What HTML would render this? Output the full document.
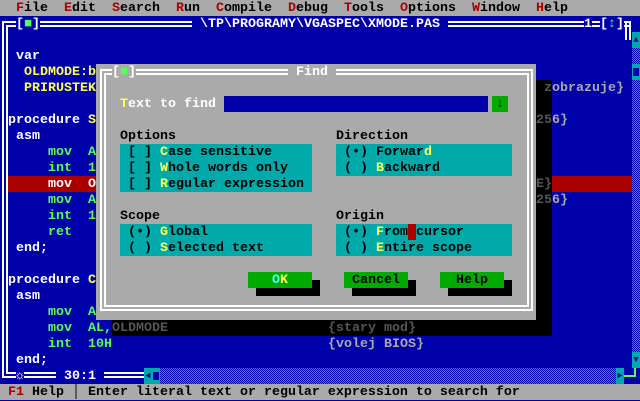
<!DOCTYPE html>
<html><head><meta charset="utf-8"><style>
*{margin:0;padding:0;box-sizing:border-box}
body{width:640px;height:400px;background:#0000aa;position:relative;overflow:hidden;font:bold 13.333px/16px "Liberation Mono","DejaVu Sans Mono",monospace}
.a{position:absolute}
.t{position:absolute;white-space:pre;height:16px;line-height:17px}
.r{color:#aa0000}.k{color:#000}.w{color:#fff}.y{color:#ffff55}.g{color:#55ff55}.l{color:#aaaaaa}.d{color:#555}.c{color:#55ffff}
.dith{background:repeating-conic-gradient(#00aaaa 0 25%,#0000aa 0 50%) 0 0/2px 2px}
</style></head><body>
<div class="a" style="left:0;top:0;width:640px;height:16px;background:#aaa"></div>
<div class="t k" style="left:0;top:0">  <span class="r">F</span>ile  <span class="r">E</span>dit  <span class="r">S</span>earch  <span class="r">R</span>un  <span class="r">C</span>ompile  <span class="r">D</span>ebug  <span class="r">T</span>ools  <span class="r">O</span>ptions  <span class="r">W</span>indow  <span class="r">H</span>elp</div>
<div class="a" style="left:2px;top:21px;width:629px;height:357px;border:6px double #fff;border-right:none"></div>
<div class="a" style="left:625px;top:21px;width:6px;height:19px;border-left:2px solid #fff;border-right:2px solid #fff"></div>
<div class="t w" style="left:16px;top:16px;background:#0000aa">[<span class="g">■</span>]</div>
<div class="t w" style="left:192px;top:16px;background:#0000aa"> \TP\PROGRAMY\VGASPEC\XMODE.PAS </div>
<div class="t w" style="left:584px;top:16px;background:#0000aa">1</div>
<div class="t w" style="left:600px;top:16px;background:#0000aa">[<span class="g">↕</span>]</div>
<div class="t w" style="left:16px;top:48px">var</div>
<div class="t y" style="left:24px;top:64px">OLDMODE:b</div>
<div class="t y" style="left:24px;top:80px">PRIRUSTEK</div>
<div class="t w" style="left:8px;top:112px">procedure <span class="y">S</span></div>
<div class="t w" style="left:16px;top:128px">asm</div>
<div class="t g" style="left:48px;top:144px">mov  A</div>
<div class="t g" style="left:48px;top:160px">int  1</div>
<div class="a" style="left:8px;top:176px;width:624px;height:16px;background:#aa0000"></div>
<div class="t w" style="left:48px;top:176px">mov  O</div>
<div class="t g" style="left:48px;top:192px">mov  A</div>
<div class="t g" style="left:48px;top:208px">int  1</div>
<div class="t g" style="left:48px;top:224px">ret</div>
<div class="t w" style="left:16px;top:240px">end;</div>
<div class="t w" style="left:8px;top:272px">procedure <span class="y">C</span></div>
<div class="t w" style="left:16px;top:288px">asm</div>
<div class="t g" style="left:48px;top:304px">mov  A</div>
<div class="t g" style="left:48px;top:320px">mov  AL,</div>
<div class="t g" style="left:48px;top:336px">int  10H</div>
<div class="t w" style="left:16px;top:352px">end;</div>
<div class="t l" style="left:544px;top:80px">zobrazuje}</div>
<div class="t l" style="left:536px;top:112px">256}</div>
<div class="t l" style="left:536px;top:176px">E}</div>
<div class="t l" style="left:536px;top:192px">256}</div>
<div class="t l" style="left:328px;top:336px">{volej BIOS}</div>
<div class="a" style="left:536px;top:80px;width:16px;height:256px;background:#000"></div>
<div class="a" style="left:112px;top:320px;width:440px;height:16px;background:#000"></div>
<div class="t d" style="left:544px;top:80px">z</div>
<div class="t d" style="left:536px;top:112px">25</div>
<div class="t d" style="left:536px;top:176px">E}</div>
<div class="t d" style="left:536px;top:192px">25</div>
<div class="t d" style="left:112px;top:320px">OLDMODE</div>
<div class="t d" style="left:328px;top:320px">{stary mod}</div>
<div class="a" style="left:96px;top:64px;width:440px;height:256px;background:#aaa"></div>
<div class="a" style="left:100px;top:69px;width:433px;height:242px;border:6px double #fff"></div>
<div class="t w" style="left:112px;top:64px;background:#aaa">[<span class="g">■</span>]</div>
<div class="t w" style="left:288px;top:64px;background:#aaa"> Find </div>
<div class="t w" style="left:120px;top:96px"><span class="y">T</span>ext to find</div>
<div class="a" style="left:224px;top:96px;width:264px;height:16px;background:#0000aa"></div>
<div class="t k" style="left:492px;top:96px;width:16px;text-align:center;background:#00aa00">↓</div>
<div class="t k" style="left:120px;top:128px">Options</div>
<div class="t k" style="left:336px;top:128px">Direction</div>
<div class="a" style="left:120px;top:144px;width:192px;height:48px;background:#00aaaa"></div>
<div class="t k" style="left:128px;top:144px">[ ] <span class="y">C</span>ase sensitive</div>
<div class="t k" style="left:128px;top:160px">[ ] <span class="y">W</span>hole words only</div>
<div class="t k" style="left:128px;top:176px">[ ] <span class="y">R</span>egular expression</div>
<div class="a" style="left:336px;top:144px;width:176px;height:32px;background:#00aaaa"></div>
<div class="t k" style="left:344px;top:144px">(•) Forwar<span class="y">d</span></div>
<div class="t k" style="left:344px;top:160px">( ) <span class="y">B</span>ackward</div>
<div class="t k" style="left:120px;top:208px">Scope</div>
<div class="t k" style="left:336px;top:208px">Origin</div>
<div class="a" style="left:120px;top:224px;width:192px;height:32px;background:#00aaaa"></div>
<div class="t k" style="left:128px;top:224px">(•) <span class="y">G</span>lobal</div>
<div class="t k" style="left:128px;top:240px">( ) <span class="y">S</span>elected text</div>
<div class="a" style="left:336px;top:224px;width:176px;height:32px;background:#00aaaa"></div>
<div class="a" style="left:408px;top:224px;width:8px;height:16px;background:#aa0000"></div>
<div class="t k" style="left:344px;top:224px">(•) <span class="y">F</span>rom cursor</div>
<div class="t k" style="left:344px;top:240px">( ) <span class="y">E</span>ntire scope</div>
<div class="a" style="left:256px;top:280px;width:64px;height:16px;background:#000"></div>
<div class="a" style="left:352px;top:280px;width:64px;height:16px;background:#000"></div>
<div class="a" style="left:448px;top:280px;width:64px;height:16px;background:#000"></div>
<div class="t" style="left:248px;top:272px;width:64px;text-align:center;background:#00aa00"><span class="c">O</span><span class="y">K</span></div>
<div class="t k" style="left:344px;top:272px;width:64px;text-align:center;background:#00aa00">Cancel</div>
<div class="t k" style="left:440px;top:272px;width:64px;text-align:center;background:#00aa00">Help</div>
<div class="a dith" style="left:632px;top:32px;width:8px;height:336px"></div>
<div class="t" style="left:632px;top:32px;width:8px;height:16px;background:#00aaaa;color:#0000aa;font-size:9px;text-align:center">▲</div>
<div class="a" style="left:632px;top:64px;width:8px;height:16px;background:#00aaaa"><div class="a" style="left:1px;top:4px;width:6px;height:8px;background:#0000aa"></div></div>
<div class="t" style="left:632px;top:352px;width:8px;height:16px;background:#00aaaa;color:#0000aa;font-size:9px;text-align:center">▼</div>
<div class="t w" style="left:16px;top:368px;background:#0000aa">☼</div>
<div class="t w" style="left:56px;top:368px;background:#0000aa"> 30:1 </div>
<div class="a dith" style="left:144px;top:368px;width:480px;height:16px"></div>
<div class="t" style="left:144px;top:368px;width:8px;background:#00aaaa;color:#0000aa;font-size:9px;text-align:center">◄</div>
<div class="a" style="left:152px;top:368px;width:8px;height:16px;background:#00aaaa"><div class="a" style="left:1px;top:4px;width:6px;height:8px;background:#0000aa"></div></div>
<div class="t" style="left:616px;top:368px;width:8px;background:#00aaaa;color:#0000aa;font-size:9px;text-align:center">►</div>
<div class="a" style="left:624px;top:368px;width:16px;height:16px;background:#0000aa"></div>
<div class="a" style="left:624px;top:375px;width:12px;height:2px;background:#55ff55"></div>
<div class="a" style="left:634px;top:368px;width:2px;height:9px;background:#55ff55"></div>
<div class="a" style="left:0;top:384px;width:640px;height:16px;background:#aaa"></div>
<div class="t k" style="left:0;top:384px"> <span class="r">F1</span> Help │ Enter literal text or regular expression to search for</div>
</body></html>
